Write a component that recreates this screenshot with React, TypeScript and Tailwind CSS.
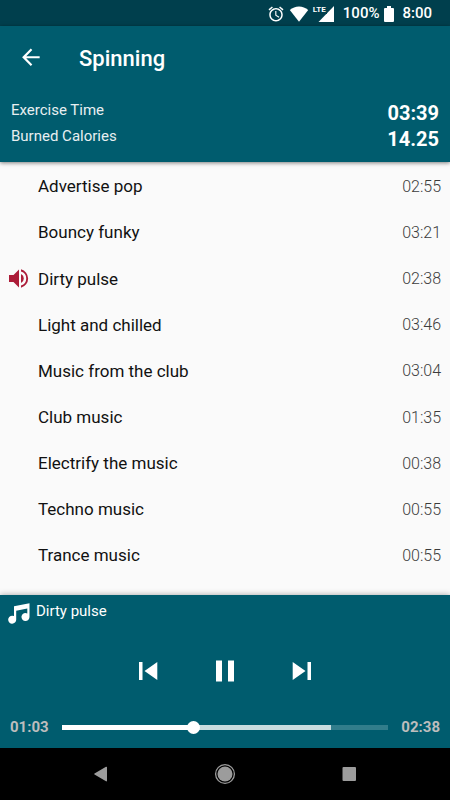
import { useState } from "react";

interface Track {
  title: string;
  duration: string;
}

const TRACKS: Track[] = [
  { title: "Advertise pop", duration: "02:55" },
  { title: "Bouncy funky", duration: "03:21" },
  { title: "Dirty pulse", duration: "02:38" },
  { title: "Light and chilled", duration: "03:46" },
  { title: "Music from the club", duration: "03:04" },
  { title: "Club music", duration: "01:35" },
  { title: "Electrify the music", duration: "00:38" },
  { title: "Techno music", duration: "00:55" },
  { title: "Trance music", duration: "00:55" },
];

const TOTAL_SECONDS = 158;
const BUFFERED_PERCENT = 82.5;

const formatTime = (seconds: number) =>
  `${String(Math.floor(seconds / 60)).padStart(2, "0")}:${String(seconds % 60).padStart(2, "0")}`;

/* -------------------- STATUS BAR -------------------- */
function StatusBar() {
  return (
    <div className="flex h-[26px] items-center justify-end bg-[#003f4d] pr-[18px] pt-px text-[15px] font-medium text-white">
      <svg className="mr-1 h-[18px] w-[18px]" viewBox="0 0 24 24" fill="currentColor">
        <path d="M22 5.72l-4.6-3.86-1.29 1.53 4.6 3.86L22 5.72zM7.88 3.39L6.6 1.86 2 5.71l1.29 1.53 4.59-3.85zM12.5 8H11v6l4.75 2.85.75-1.23-4-2.37V8zM12 4c-4.97 0-9 4.03-9 9s4.02 9 9 9c4.97 0 9-4.03 9-9s-4.03-9-9-9zm0 16c-3.87 0-7-3.13-7-7s3.13-7 7-7 7 3.13 7 7-3.13 7-7 7z" />
      </svg>
      <svg className="mr-[5px] h-4 w-5" viewBox="0 0 20 16" fill="currentColor">
        <path d="M10 15.8L.8 4.1C3.4 1.7 6.6.4 10 .4s6.6 1.3 9.2 3.700z" />
      </svg>
      <div className="relative mr-[9px] h-4 w-5">
        <svg className="h-4 w-5" viewBox="0 0 20 16" fill="currentColor">
          <path d="M20 0v16H4.500z" />
        </svg>
        <span className="absolute -left-px -top-px bg-[#003f4d] pr-px text-[8px] font-bold leading-[9px]">
          LTE
        </span>
      </div>
      <span>100%</span>
      <svg className="ml-[5px] mr-2 h-4 w-[10px]" viewBox="0 0 10 16" fill="currentColor">
        <path d="M3 0h4v2h2a1 1 0 0 1 1 1v12a1 1 0 0 1-1 1H1a1 1 0 0 1-1-1V3a1 1 0 0 1 1-1h2z" />
      </svg>
      <span>8:00</span>
    </div>
  );
}

/* -------------------- HEADER -------------------- */
function Header() {
  return (
    <header className="relative z-10 bg-[#005c6e] text-white shadow-[0_1px_4px_rgba(0,0,0,0.5)]">
      <div className="flex h-16 items-center px-[18px]">
        <button type="button" aria-label="Back" className="mr-[35px]">
          <svg className="h-[26px] w-[26px]" viewBox="0 0 24 24" fill="currentColor">
            <path d="M20 10.300H7.600l5.590-5.590L11.800 3.300l-8 8 8 8 1.410-1.410L7.600 12.300H20v-2z" />
          </svg>
        </button>
        <h1 className="text-[22px] font-medium">Spinning</h1>
      </div>
      <dl className="px-[11px] pb-3 pt-2">
        <div className="flex h-[26px] justify-between">
          <dt className="text-[15px] leading-6 text-[#e8eff1]">Exercise Time</dt>
          <dd className="text-xl font-bold leading-[30px]">03:39</dd>
        </div>
        <div className="flex h-[26px] justify-between">
          <dt className="text-[15px] leading-6 text-[#e8eff1]">Burned Calories</dt>
          <dd className="text-xl font-bold leading-[30px]">14.25</dd>
        </div>
      </dl>
    </header>
  );
}

/* -------------------- TRACK LIST -------------------- */
interface TrackListProps {
  current: number;
  onSelect: (index: number) => void;
}

function TrackList({ current, onSelect }: TrackListProps) {
  return (
    <ul className="flex flex-1 flex-col pb-4 pt-[2px]">
      {TRACKS.map((track, index) => (
        <li key={track.title} className="flex min-h-11 flex-1">
          <button
            type="button"
            onClick={() => onSelect(index)}
            className="flex flex-1 items-center pl-2 pr-[9px] text-left"
          >
            <span className="w-[30px]">
              {index === current && (
                <svg className="h-5 w-[21px]" viewBox="0 0 21 20" fill="#ac1c38">
                  <path d="M1 6h4.500L11 .500v18L5.500 13H1zM13 5a5 5 0 0 1 0 9zM13 .300a9.500 9.500 0 0 1 0 18.400v-2.200a7.300 7.300 0 0 0 0-14z" />
                </svg>
              )}
            </span>
            <span className="flex-1 text-[17px] text-[#111]">{track.title}</span>
            <span className="text-base font-light text-[#3c3c3c]">{track.duration}</span>
          </button>
        </li>
      ))}
    </ul>
  );
}

/* -------------------- PLAYER -------------------- */
interface PlayerProps {
  title: string;
  onStep: (delta: number) => void;
}

function Player({ title, onStep }: PlayerProps) {
  const [position, setPosition] = useState(63);
  const [playing, setPlaying] = useState(true);
  const played = (position / TOTAL_SECONDS) * 100;

  return (
    <section className="bg-[#005c6e] text-white shadow-[0_0_6px_rgba(0,0,0,0.35)]">
      <div className="flex h-9 items-center pl-2">
        <svg className="mr-[5px] h-[22px] w-[23px]" viewBox="0 0 23 22" fill="currentColor">
          <path d="M6 4.300L21.500 1.300V14.800a4 4 0 1 1-2.200-3.400V6.500L8.200 8.700V17.400a4 4 0 1 1-2.200-3.300z" />
        </svg>
        <p className="-mt-1 text-[15px]">{title}</p>
      </div>
      <div className="flex h-20 items-center justify-center gap-[53px]">
        <button type="button" aria-label="Previous" onClick={() => onStep(-1)}>
          <svg className="h-6 w-6" viewBox="0 0 24 24" fill="currentColor">
            <path d="M3 3h3.500v18H3zM21.300 3v18L8.500 12z" />
          </svg>
        </button>
        <button
          type="button"
          aria-label={playing ? "Pause" : "Play"}
          onClick={() => setPlaying((v) => !v)}
        >
          <svg className="h-6 w-6" viewBox="0 0 24 24" fill="currentColor">
            {playing ? <path d="M3 1.500h6v21H3zM15 1.500h6v21h-6z" /> : <path d="M4 2v21l17-10.500z" />}
          </svg>
        </button>
        <button type="button" aria-label="Next" onClick={() => onStep(1)}>
          <svg className="h-6 w-6" viewBox="0 0 24 24" fill="currentColor">
            <path d="M17.500 3H21v18h-3.500zM2.700 3v18L15.500 12z" />
          </svg>
        </button>
      </div>
      <div className="flex h-[37px] items-center px-[10px] pb-1 text-[15px] font-bold text-[#bdbdbd]">
        <span className="w-[52px]">{formatTime(position)}</span>
        <input
          type="range"
          aria-label="Playback position"
          min={0}
          max={TOTAL_SECONDS}
          value={position}
          onChange={(e) => setPosition(Number(e.target.value))}
          className="h-[5px] min-w-0 flex-1 cursor-pointer appearance-none [&::-webkit-slider-thumb]:h-[13px] [&::-webkit-slider-thumb]:w-[13px] [&::-webkit-slider-thumb]:appearance-none [&::-webkit-slider-thumb]:rounded-full [&::-webkit-slider-thumb]:bg-white"
          style={{
            background: `linear-gradient(to right, #fff ${played}%, #c8dcdf ${played}%, #c8dcdf ${BUFFERED_PERCENT}%, #317d8b ${BUFFERED_PERCENT}%)`,
          }}
        />
        <span className="w-[52px] text-right">{formatTime(TOTAL_SECONDS)}</span>
      </div>
    </section>
  );
}

/* -------------------- NAVIGATION BAR -------------------- */
function NavigationBar() {
  return (
    <nav className="flex h-[52px] items-center justify-center gap-[100px] bg-black text-[#9c9c9c]">
      <button type="button" aria-label="System back">
        <svg className="h-6 w-6" viewBox="0 0 24 24" fill="currentColor">
          <path d="M17 4.800c.5-.3 1 0 1 .500v13.500c0 .500-.5.800-1 .500L5.500 12.600q-.7-.6 0-1.200z" />
        </svg>
      </button>
      <button type="button" aria-label="Home">
        <svg className="h-6 w-6" viewBox="0 0 24 24" fill="currentColor">
          <circle cx="12" cy="12" r="7.500" />
          <circle cx="12" cy="12" r="9.400" fill="none" stroke="currentColor" strokeWidth="1.300" />
        </svg>
      </button>
      <button type="button" aria-label="Recent apps">
        <svg className="h-6 w-6" viewBox="0 0 24 24" fill="currentColor">
          <rect x="5.500" y="5" width="13.500" height="14" rx="1" />
        </svg>
      </button>
    </nav>
  );
}

export default function App() {
  const [current, setCurrent] = useState(2);

  const step = (delta: number) =>
    setCurrent((prev) => (prev + delta + TRACKS.length) % TRACKS.length);

  return (
    <div className="flex min-h-screen flex-col bg-[#fafafa] font-[Roboto,sans-serif]">
      <StatusBar />
      <Header />
      <TrackList current={current} onSelect={setCurrent} />
      <Player title={TRACKS[current].title} onStep={step} />
      <NavigationBar />
    </div>
  );
}
